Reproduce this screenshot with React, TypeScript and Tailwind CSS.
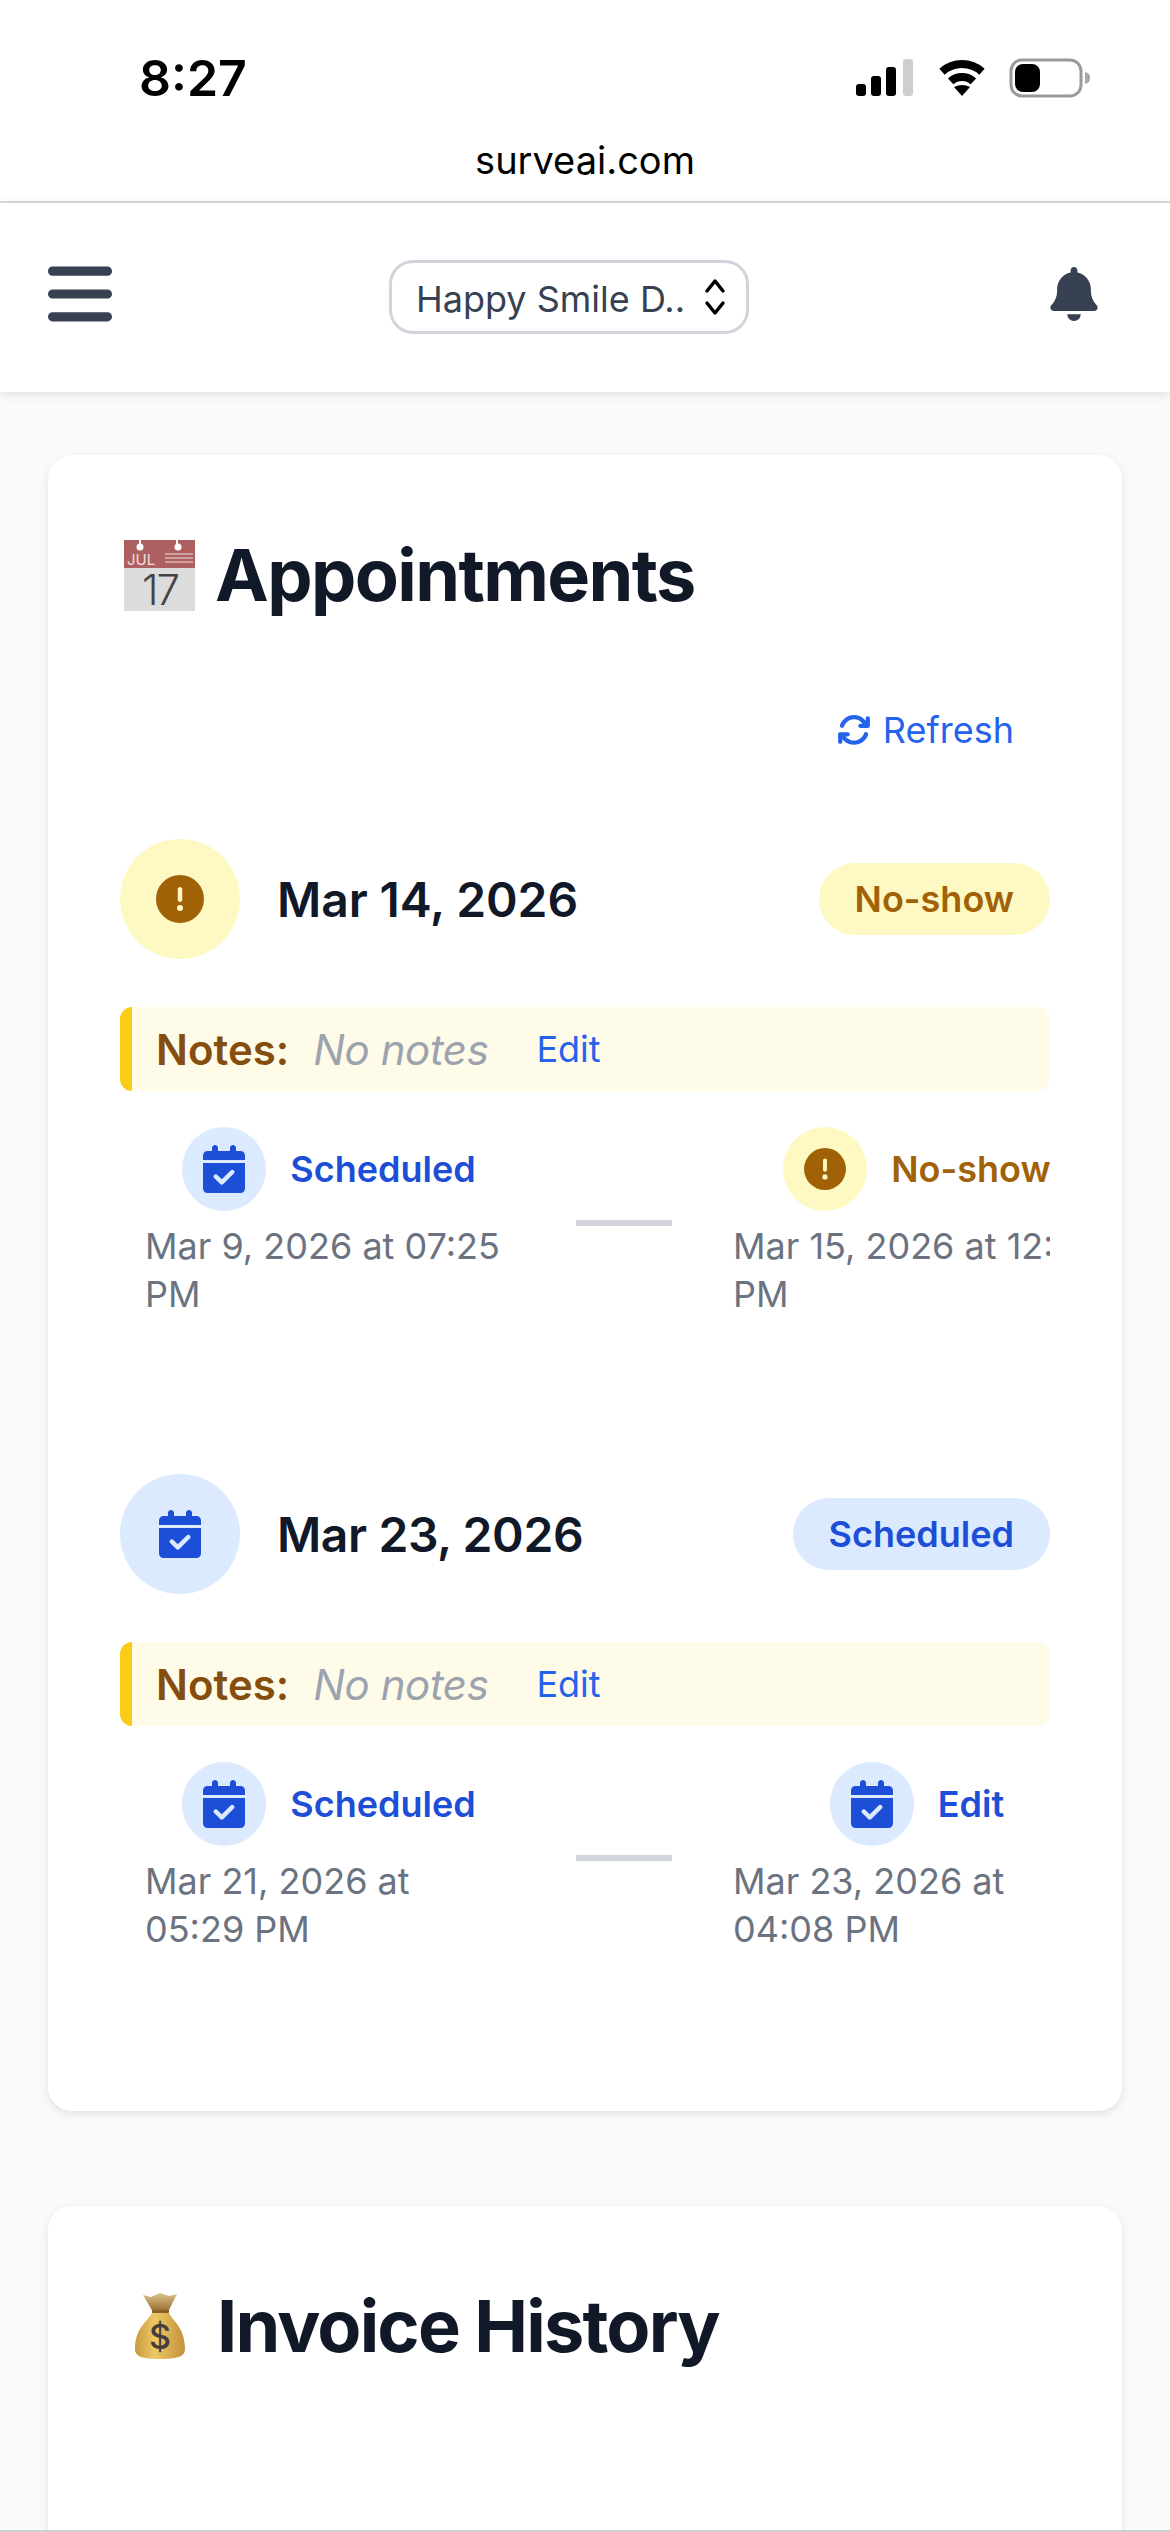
import React from 'react';
import { FaBell, FaBars, FaCalendarCheck, FaCircleExclamation, FaArrowsRotate } from 'react-icons/fa6';

const CalendarEmoji = () => (
    <svg viewBox="0 0 71 71" className="w-[71px] h-[71px] shrink-0 overflow-visible">
        <rect x="0" y="0" width="71" height="71" fill="#dcdcdc" />
        <rect x="0" y="0" width="71" height="28" fill="#ad6060" />
        <circle cx="16" cy="7" r="3.5" fill="#fff" />
        <circle cx="54" cy="7" r="3.5" fill="#fff" />
        <rect x="15" y="0" width="2" height="5" fill="#fff" />
        <rect x="52" y="0" width="2" height="5" fill="#fff" />
        <text x="3" y="25" fontSize="15" fill="#f3dede" fontFamily="Inter, sans-serif">JUL</text>
        <g fill="#cf9f9f">
            <rect x="41" y="13" width="28" height="2" />
            <rect x="41" y="17" width="28" height="2" />
            <rect x="41" y="21" width="28" height="2" />
        </g>
        <text x="36" y="65" textAnchor="middle" fontSize="42" fontWeight="300" letterSpacing="-2" fill="#444" fontFamily="Inter, sans-serif">17</text>
    </svg>
);

const MoneyBag = () => (
    <svg viewBox="0 0 50 66" className="w-[50px] h-[66px] shrink-0">
        <defs>
            <linearGradient id="bag" x1="0" y1="0" x2="1" y2="0">
                <stop offset="0" stopColor="#c99a3f" />
                <stop offset="0.4" stopColor="#ebc866" />
                <stop offset="1" stopColor="#c4913a" />
            </linearGradient>
            <linearGradient id="neck" x1="0" y1="0" x2="0" y2="1">
                <stop offset="0" stopColor="#ddc48f" />
                <stop offset="1" stopColor="#96682a" />
            </linearGradient>
        </defs>
        <path d="M8 2 L16 4 L25 0 L34 3 L42 1 L33 19 L18 19 Z" fill="url(#neck)" />
        <path d="M18 18 L33 18 C36 27 50 33 50 56 C50 63 44 66 25 66 C6 66 0 63 0 56 C0 33 15 27 18 18 Z" fill="url(#bag)" />
        <rect x="17" y="17" width="17" height="3" rx="1" fill="#8a5f25" />
        <text x="25" y="56" textAnchor="middle" fontSize="34" fontWeight="500" fill="#463c3c" fontFamily="Inter, sans-serif">$</text>
    </svg>
);

const StatusBar = () => (
    <div className="h-[201px] relative">
        <div className="absolute left-[139px] top-[50px] text-[50px] leading-[56px] font-semibold text-black">8:27</div>
        <div className="absolute left-[856px] top-[58px]">
            <svg width="236" height="40" viewBox="0 0 236 40">
                <rect x="0" y="26" width="10" height="12" rx="3" fill="#000" />
                <rect x="15" y="18" width="10" height="20" rx="3" fill="#000" />
                <rect x="30" y="9" width="10" height="29" rx="3" fill="#000" />
                <rect x="47" y="1" width="10" height="37" rx="3" fill="#cfcfcf" />
                <g fill="none" stroke="#000" strokeWidth="8">
                    <path d="M86 13.7 A30 30 0 0 1 126 13.7" />
                    <path d="M94.6 23.4 A17 17 0 0 1 117.4 23.4" />
                </g>
                <path d="M106 38 L98 29 Q106 25 114 29 Z" fill="#000" />
                <rect x="155" y="2" width="70" height="36" rx="11" fill="none" stroke="#9a9a9a" strokeWidth="3" />
                <rect x="159" y="6" width="25" height="28" rx="8" fill="#000" />
                <path d="M229 14 C233 15 234 17 234 20 C234 23 233 25 229 26 Z" fill="#a8a8a8" />
            </svg>
        </div>
        <div className="absolute left-0 right-0 top-[135px] text-center text-[38px] leading-[50px] text-black">surveai.com</div>
    </div>
);

const TopNav = () => (
    <div className="h-[191px] bg-white border-t-2 border-[#d4d4d8] shadow-[0_3px_9px_rgba(0,0,0,0.1)] flex items-center justify-between pl-[48px] pr-[72px]">
        <FaBars className="w-[64px] h-[74px] text-[#374151] -mt-[8px]" />
        <div className="w-[360px] h-[74px] rounded-[24px] border-[3px] border-[#d1d5db] flex items-center justify-between pl-[24px] pr-[20px] -mt-[2px] mr-[24px]">
            <span className="text-[36px] leading-[44px] text-[#374151] whitespace-nowrap mt-[4px]">Happy Smile D..</span>
            <svg width="22" height="38" viewBox="0 0 22 38" fill="none" stroke="#000" strokeWidth="3.5" strokeLinecap="round" strokeLinejoin="round">
                <path d="M3 13 L11 3 L19 13" />
                <path d="M3 25 L11 35 L19 25" />
            </svg>
        </div>
        <FaBell className="w-[48px] h-[54px] text-[#374151] -mt-[8px]" />
    </div>
);

type Tone = 'blue' | 'yellow';

const StepIcon = ({ tone }: { tone: Tone }) => (
    <div className={`w-[84px] h-[84px] rounded-full flex items-center justify-center shrink-0 ${tone === 'blue' ? 'bg-[#dbeafe]' : 'bg-[#fef9c3]'}`}>
        {tone === 'blue'
            ? <FaCalendarCheck className="w-[42px] h-[48px] text-[#1d4ed8]" />
            : <FaCircleExclamation className="w-[42px] h-[42px] text-[#a16207]" />}
    </div>
);

interface StepProps {
    tone: Tone;
    label: string;
    lines: string[];
}

const Step = ({ tone, label, lines }: StepProps) => (
    <div className="w-[368px] shrink-0">
        <div className="flex items-center justify-center gap-[24px] h-[84px]">
            <StepIcon tone={tone} />
            <span className={`text-[36px] leading-[48px] font-semibold whitespace-nowrap ${tone === 'blue' ? 'text-[#1d4ed8]' : 'text-[#a16207]'}`}>{label}</span>
        </div>
        <div className="mt-[11px] text-[36px] leading-[48px] text-[#6b7280] whitespace-nowrap">
            {lines.map(l => <div key={l}>{l}</div>)}
        </div>
    </div>
);

interface AppointmentProps {
    date: string;
    dateClass: string;
    tone: Tone;
    badge: string;
    from: StepProps;
    to: StepProps;
}

const Appointment = ({ date, dateClass, tone, badge, from, to }: AppointmentProps) => (
    <div>
        <div className="flex items-center h-[120px]">
            <div className={`w-[120px] h-[120px] rounded-full flex items-center justify-center ${tone === 'blue' ? 'bg-[#dbeafe]' : 'bg-[#fef9c3]'}`}>
                {tone === 'blue'
                    ? <FaCalendarCheck className="w-[42px] h-[48px] text-[#1d4ed8]" />
                    : <FaCircleExclamation className="w-[48px] h-[48px] text-[#a16207]" />}
            </div>
            <div className={`ml-[37px] text-[48px] leading-[64px] font-semibold text-[#111827] mt-[2px] ${dateClass}`}>{date}</div>
            <div className={`ml-auto h-[72px] px-[36px] rounded-full flex items-center text-[36px] font-semibold ${tone === 'blue' ? 'bg-[#dbeafe] text-[#1d4ed8]' : 'bg-[#fef9c3] text-[#a16207]'}`}>{badge}</div>
        </div>
        <div className="mt-[48px] h-[84px] bg-[#fefce8] border-l-[12px] border-[#facc15] rounded-[12px] flex items-center pl-[24px]">
            <span className="text-[42px] font-semibold text-[#854d0e]">Notes:</span>
            <span className="ml-[24px] text-[42px] italic text-[#9ca3af] tracking-[-0.4px]">No notes</span>
            <span className="ml-[48px] text-[36px] text-[#2563eb]">Edit</span>
        </div>
        <div className="mt-[36px] flex overflow-hidden pl-[25px]">
            <Step {...from} />
            <div className="w-[96px] h-[6px] bg-[#d1d5db] shrink-0 mt-[93px] ml-[63px] mr-[61px]" />
            <Step {...to} />
        </div>
    </div>
);

export default function App() {
    return (
        <div className="h-[2532px] overflow-hidden bg-[#f9fafb] border-b-2 border-[#cfcfcf] font-['Inter',sans-serif]">
            <div className="bg-white">
                <StatusBar />
            </div>
            <TopNav />
            <div className="px-[48px] pt-[63px]">
                <div className="bg-white rounded-[24px] shadow-[0_3px_9px_rgba(0,0,0,0.1)] px-[72px] pt-[72px] pb-[158px]">
                    <div className="flex items-center h-[96px] gap-[20px] pl-[4px]">
                        <CalendarEmoji />
                        <h2 className="text-[72px] leading-[96px] font-bold text-[#111827] tracking-[-1.6px]">Appointments</h2>
                    </div>
                    <div className="mt-[83px] mb-[85px] pr-[36px] flex justify-end items-center gap-[12px] text-[36px] leading-[48px] text-[#2563eb]">
                        <FaArrowsRotate className="w-[34px] h-[34px]" />
                        <span>Refresh</span>
                    </div>
                    <Appointment
                        date="Mar 14, 2026"
                        dateClass="tracking-[-0.1px]"
                        tone="yellow"
                        badge="No-show"
                        from={{ tone: 'blue', label: 'Scheduled', lines: ['Mar 9, 2026 at 07:25', 'PM'] }}
                        to={{ tone: 'yellow', label: 'No-show', lines: ['Mar 15, 2026 at 12:36', 'PM'] }}
                    />
                    <div className="h-[156px]" />
                    <Appointment
                        date="Mar 23, 2026"
                        dateClass="tracking-[-0.4px]"
                        tone="blue"
                        badge="Scheduled"
                        from={{ tone: 'blue', label: 'Scheduled', lines: ['Mar 21, 2026 at', '05:29 PM'] }}
                        to={{ tone: 'blue', label: 'Edit', lines: ['Mar 23, 2026 at', '04:08 PM'] }}
                    />
                </div>
                <div className="mt-[95px] bg-white rounded-t-[24px] shadow-[0_3px_9px_rgba(0,0,0,0.1)] px-[72px] pt-[72px] h-[400px]">
                    <div className="flex items-center h-[96px] gap-[32px] pl-[15px]">
                        <MoneyBag />
                        <h2 className="text-[72px] leading-[96px] font-bold text-[#111827] tracking-[-1.8px]">Invoice History</h2>
                    </div>
                </div>
            </div>
        </div>
    );
}
